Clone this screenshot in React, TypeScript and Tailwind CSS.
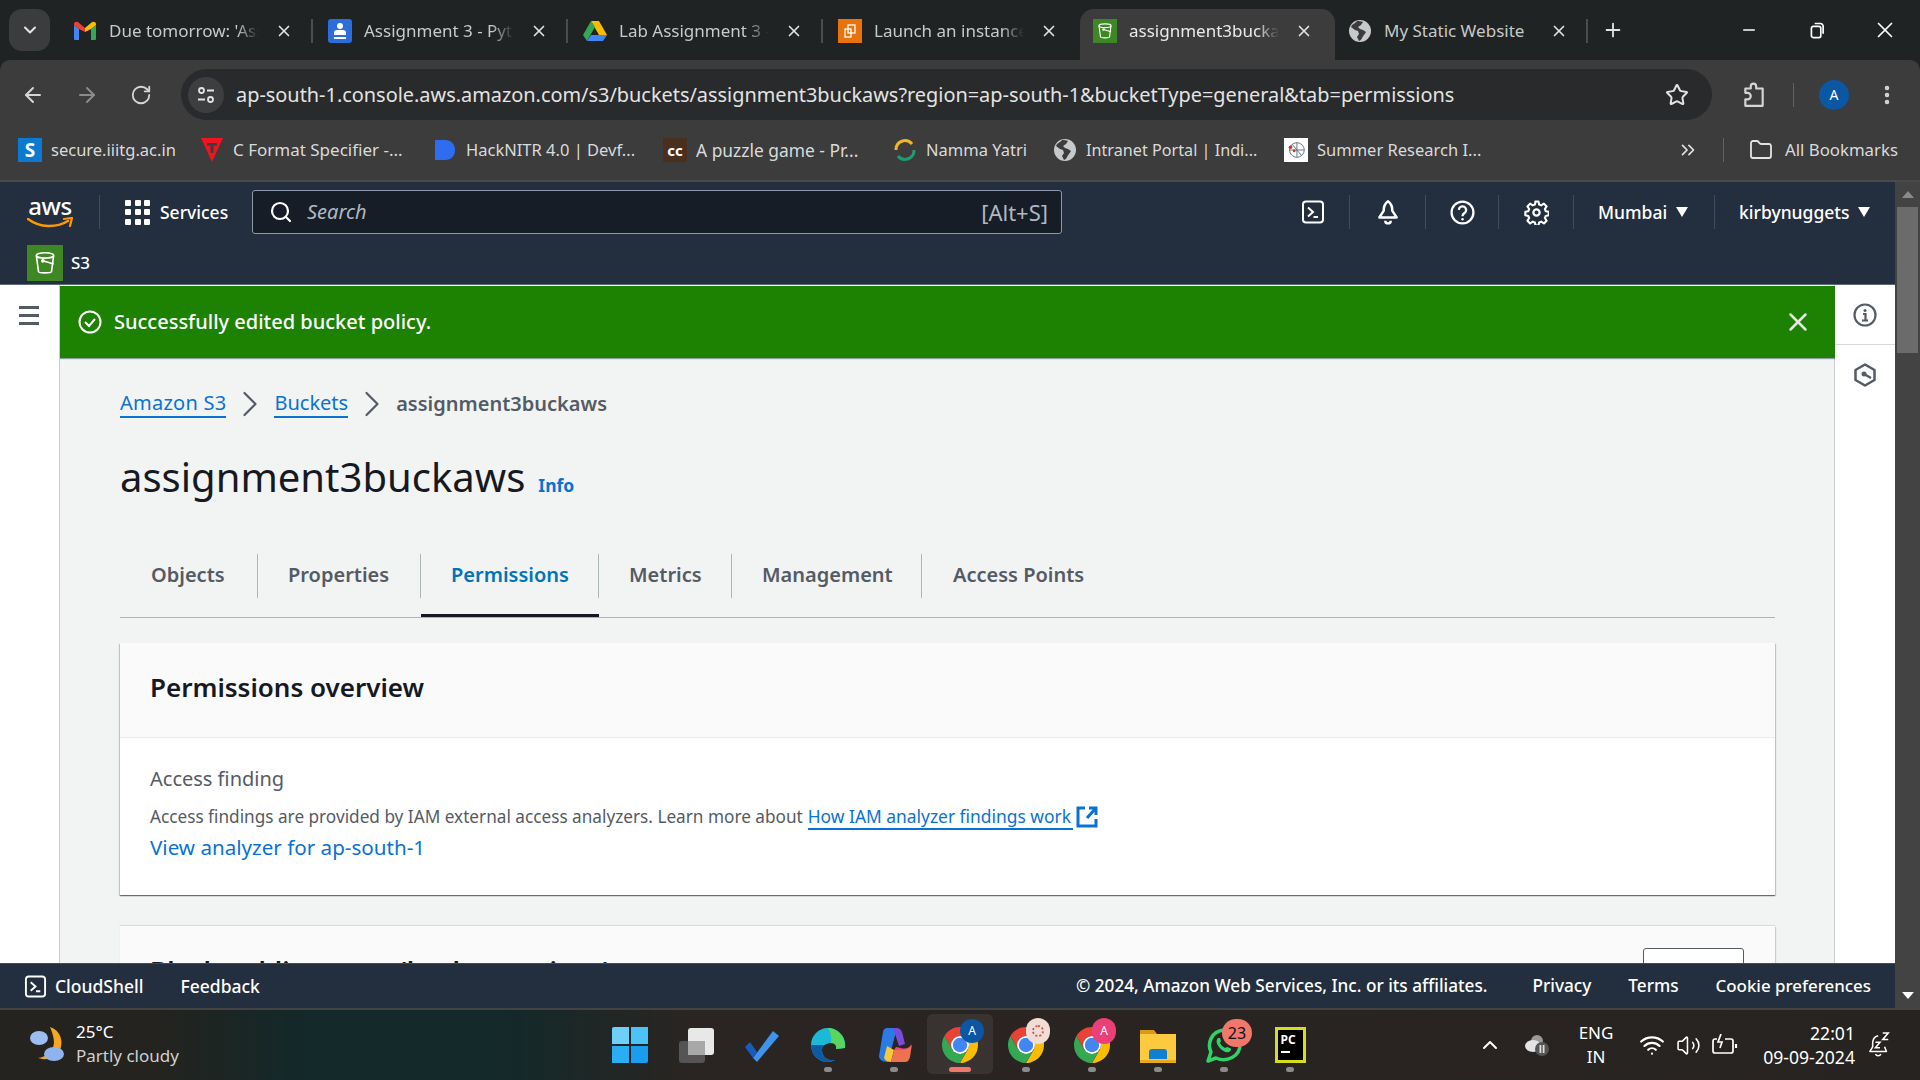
import React from "react";
import { ArrowLeft, ArrowRight, RotateCw, Star, MoreVertical, Folder, ChevronsRight, ChevronDown, X, Plus, Minus, Search, ChevronUp, Wifi, Volume2, ChevronRight } from "lucide-react";

const Gmail = () => (
  <svg viewBox="0 0 24 20" className="w-[24px] h-[20px]">
    <path d="M1 4v14a1 1 0 0 0 1 1h4V8z" fill="#4285f4" />
    <path d="M18 8v11h4a1 1 0 0 0 1-1V4z" fill="#34a853" />
    <path d="M1 4l0-1c0-2 3-3 4.500-1.500L12 7l0 4-6-3z" fill="#ea4335" />
    <path d="M23 4V3c0-2-3-3-4.500-1.500L12 7v4l6-3z" fill="#fbbc04" />
  </svg>
);
const Classroom = () => (
  <div className="w-[24px] h-[24px] rounded-[3px] bg-[#2a6ddb] flex flex-col items-center justify-center">
    <div className="w-[6px] h-[6px] rounded-full bg-white" />
    <div className="w-[12px] h-[5px] bg-white rounded-t-[3px] mt-[1px]" />
    <div className="w-[12px] h-[2px] bg-white mt-[2px]" />
  </div>
);
const Drive = () => (
  <svg viewBox="0 0 24 22" className="w-[24px] h-[22px]">
    <path d="M8 1h8l8 14h-8z" fill="#fbbc04" />
    <path d="M8 1 0 15l4 6 8-14z" fill="#34a853" />
    <path d="M4 21h16l4-6H8z" fill="#4285f4" />
  </svg>
);
const Ec2Fav = () => (
  <div className="w-[24px] h-[24px] bg-[#e8720c] flex items-center justify-center">
    <svg viewBox="0 0 16 16" className="w-[16px] h-[16px]" fill="none" stroke="#fff" strokeWidth="1.300">
      <rect x="6" y="2" width="7" height="8" />
      <rect x="3" y="6" width="6" height="8" />
    </svg>
  </div>
);
const BucketGlyph = ({ size }: { size: number }) => (
  <svg viewBox="0 0 24 24" width={size} height={size} fill="none" stroke="#fff" strokeWidth="1.500">
    <ellipse cx="12" cy="5" rx="8" ry="2.500" />
    <path d="M4 5l2 15c.2 1.500 11.800 1.500 12 0l2-15" />
    <path d="M10 10l10 3" />
    <circle cx="10" cy="10" r="1" fill="#fff" />
  </svg>
);
const S3Fav = () => (
  <div className="w-[24px] h-[24px] bg-[#3f8624] flex items-center justify-center">
    <BucketGlyph size={18} />
  </div>
);
const Globe = ({ s = 24 }: { s?: number }) => (
  <svg viewBox="0 0 24 24" width={s} height={s}>
    <circle cx="12" cy="12" r="11" fill="#c7c9ca" />
    <path d="M9 2c-1 2-5 3-6 6l4 3 3 1 1 3-2 3 2 4c3-1 3-4 5-6l2-3-3-2-3-1-2-2 3-2 2-3c-2-1-4-1-6-1z" fill="#3c3c3c" />
  </svg>
);

const tabs = [
  { icon: <Gmail />, t: "Due tomorrow: 'Assignment 3" },
  { icon: <Classroom />, t: "Assignment 3 - Python" },
  { icon: <Drive />, t: "Lab Assignment 3 - Google" },
  { icon: <Ec2Fav />, t: "Launch an instance | EC2" },
  { icon: <S3Fav />, t: "assignment3buckaws - S3", active: true },
  { icon: <Globe />, t: "My Static Website", plain: true },
];

function TabStrip() {
  return (
    <div className="h-[60px] bg-[#202323] flex pl-[9px] pt-[9px]">
      <div className="w-[41px] h-[42px] rounded-[13px] bg-[#3a3c3e] flex items-center justify-center">
        <ChevronDown size={20} color="#e3e3e3" strokeWidth={2.500} />
      </div>
      <div className="flex ml-[10px]">
        {tabs.map((t, i) => (
          <div key={i} className={`w-[255px] h-[51px] flex items-center pl-[13px] relative pb-[8px] ${t.active ? "bg-[#3c3c3c] rounded-t-[14px] h-[51px]" : ""}`}>
            <div className="w-[24px] h-[24px] flex items-center justify-center shrink-0">{t.icon}</div>
            <div className={`ml-[12px] w-[150px] text-[17px] whitespace-nowrap overflow-hidden ${t.plain ? "" : "[mask-image:linear-gradient(90deg,#000_85%,transparent)]"} ${t.active ? "text-[#e8eaed]" : "text-[#c7c9ca]"}`}>{t.t}</div>
            <div className="ml-[13px] w-[24px] flex justify-center"><X size={18} color="#e3e3e3" strokeWidth={2.200} /></div>
            {!t.active && i !== 3 && <div className="w-[2px] h-[24px] bg-[#4a4c4e] ml-[15px]" />}
          </div>
        ))}
      </div>
      <div className="w-[46px] h-[42px] flex items-center justify-center"><Plus size={22} color="#e3e3e3" strokeWidth={2} /></div>
      <div className="ml-auto flex h-[42px] pr-[1px]">
        <div className="w-[68px] flex items-center justify-center"><Minus size={18} color="#fff" strokeWidth={2} /></div>
        <div className="w-[68px] flex items-center justify-center">
          <svg viewBox="0 0 16 18" className="w-[15px] h-[17px]" fill="none" stroke="#fff" strokeWidth="1.800">
            <rect x="1.500" y="4.500" width="10" height="12" rx="2" />
            <path d="M5 1.500h6a3 3 0 0 1 3 3v8" />
          </svg>
        </div>
        <div className="w-[68px] flex items-center justify-center"><X size={26} color="#fff" strokeWidth={1.600} /></div>
      </div>
    </div>
  );
}

function Toolbar() {
  return (
    <div className="h-[60px] bg-[#3c3c3c] rounded-t-[10px] flex items-center pl-[6px] pt-[9px]">
      <div className="w-[54px] flex justify-center"><ArrowLeft size={24} color="#d5d5d5" strokeWidth={2} /></div>
      <div className="w-[54px] flex justify-center"><ArrowRight size={24} color="#8a8b8c" strokeWidth={2} /></div>
      <div className="w-[54px] flex justify-center"><RotateCw size={22} color="#d5d5d5" strokeWidth={2} /></div>
      <div className="ml-[13px] w-[1531px] h-[51px] rounded-full bg-[#282a2b] flex items-center pl-[7px]">
        <div className="w-[36px] h-[36px] rounded-full bg-[#3c3e40] flex items-center justify-center">
          <svg viewBox="0 0 20 20" className="w-[20px] h-[20px]" fill="none" stroke="#e3e3e3" strokeWidth="1.800">
            <circle cx="5.500" cy="5.500" r="2.500" />
            <path d="M11 5.500h7M2 14.500h7" />
            <circle cx="14.500" cy="14.500" r="2.500" />
          </svg>
        </div>
        <div className="ml-[12px] text-[19.900px] text-[#e3e3e3] whitespace-nowrap">ap-south-1.console.aws.amazon.com/s3/buckets/assignment3buckaws?region=ap-south-1&amp;bucketType=general&amp;tab=permissions</div>
        <div className="ml-auto mr-[23px]"><Star size={24} color="#e3e3e3" strokeWidth={2} /></div>
      </div>
      <div className="w-[84px] flex justify-center">
        <svg viewBox="0 0 24 24" className="w-[26px] h-[26px]" fill="none" stroke="#d5d5d5" strokeWidth="2">
          <path d="M4 6h5V4a2.500 2.500 0 0 1 5 0v2h6v16H4v-6h2a3 3 0 0 0 0-6H4z" strokeLinejoin="round" />
        </svg>
      </div>
      <div className="w-[1px] h-[24px] bg-[#606264] -ml-[3px]" />
      <div className="ml-[25px] w-[30px] h-[30px] rounded-full bg-[#0b57a4] text-white text-[14px] flex items-center justify-center">A</div>
      <div className="ml-[26px]"><MoreVertical size={24} color="#d5d5d5" strokeWidth={2.500} /></div>
    </div>
  );
}

const Bm = ({ w, icon, t, fs = "text-[16.500px]" }: { w: string; icon: React.ReactNode; t: string; fs?: string }) => (
  <div className={`${w} flex items-center shrink-0`}>
    <div className="w-[24px] h-[24px] flex items-center justify-center shrink-0">{icon}</div>
    <div className={`ml-[9px] ${fs} text-[#d9dadb] whitespace-nowrap`}>{t}</div>
  </div>
);

function Bookmarks() {
  return (
    <div className="h-[62px] bg-[#3c3c3c] border-b-2 border-[#4a4a4a] flex items-center pl-[18px]">
      <Bm w="w-[182px]" t="secure.iiitg.ac.in" icon={<div className="w-[24px] h-[24px] bg-[#0a7bd0] text-white font-bold text-[19px] flex items-center justify-center">S</div>} />
      <Bm w="w-[233px]" fs="text-[17px]" t="C Format Specifier -..." icon={<svg viewBox="0 0 24 24" className="w-[24px] h-[24px]"><path d="M1 0h22L12 24z" fill="#f0141e" /><path d="M7 5h10v2.500h-3.500V15h-3V7.500H7z" fill="#3c3c3c" /></svg>} />
      <Bm w="w-[230px]" t="HackNITR 4.0 | Devf..." icon={<svg viewBox="0 0 24 24" className="w-[24px] h-[24px]"><path d="M2 2h10c6 0 10 4 10 10s-4 10-10 10H2z" fill="#2f6df0" /></svg>} />
      <Bm w="w-[230px]" fs="text-[17.400px]" t="A puzzle game - Pr..." icon={<div className="w-[24px] h-[24px] bg-[#4b2f1e] text-white font-bold text-[15px] flex items-center justify-center">cc</div>} />
      <Bm w="w-[160px]" t="Namma Yatri" icon={<svg viewBox="0 0 24 24" className="w-[24px] h-[24px]" fill="none" strokeWidth="3"><path d="M3 12a9 9 0 0 1 16-6" stroke="#f5b32a" /><path d="M21 12a9 9 0 0 1-16 6" stroke="#1f9d72" /></svg>} />
      <Bm w="w-[231px]" fs="text-[16.200px]" t="Intranet Portal | Indi..." icon={<Globe />} />
      <Bm w="w-[393px]" t="Summer Research I..." icon={<div className="w-[24px] h-[24px] bg-white flex items-center justify-center"><svg viewBox="0 0 24 24" className="w-[22px] h-[22px]" fill="none" stroke="#58707e" strokeWidth="1"><circle cx="13" cy="12" r="8" /><path d="M13 4v16M5 12h16M8 6l10 12" /><circle cx="6" cy="9" r="2" fill="#d3312f" stroke="none" /><circle cx="10" cy="13" r="1.500" fill="#d3312f" stroke="none" /></svg></div>} />
      <ChevronsRight size={22} color="#e3e3e3" strokeWidth={1.800} />
      <div className="w-[1px] h-[24px] bg-[#606264] ml-[24px]" />
      <div className="ml-[25px]"><Folder size={24} color="#e3e3e3" strokeWidth={1.800} /></div>
      <div className="ml-[12px] text-[16.800px] text-[#d9dadb] whitespace-nowrap">All Bookmarks</div>
    </div>
  );
}

const NavSep = () => <div className="w-[1px] h-[34px] bg-[#414d5c] shrink-0" />;

const ShellIcon = ({ s = 24 }: { s?: number }) => (
  <svg viewBox="0 0 24 24" width={s} height={s} fill="none" stroke="#fff" strokeWidth="2">
    <rect x="2" y="1.500" width="20" height="21" rx="3" />
    <path d="M7 7.500l5 4.500-5 4.500M12.500 17H17" />
  </svg>
);

function AwsNav() {
  return (
    <div className="bg-[#232f3e] border-b border-[#5f6b7a] shrink-0">
      <div className="h-[60px] flex items-center text-white">
        <div className="w-[99px] pl-[27px]">
          <div className="w-[46px] flex flex-col items-center leading-none">
            <span className="text-[24px] leading-[22px] font-medium -tracking-[0.5px]">aws</span>
            <svg viewBox="0 0 46 12" className="w-[46px] h-[12px]" fill="none">
              <path d="M1 2c12 9 28 9 40 2" stroke="#f90" strokeWidth="2.500" strokeLinecap="round" />
              <path d="M37 2l8-1-2 8" stroke="#f90" strokeWidth="2.200" strokeLinecap="round" strokeLinejoin="round" />
            </svg>
          </div>
        </div>
        <NavSep />
        <div className="ml-[25px] grid grid-cols-3 gap-[3.500px]">
          {Array.from({ length: 9 }).map((_, i) => <div key={i} className="w-[6px] h-[6px] bg-white rounded-[1px]" />)}
        </div>
        <span className="ml-[10px] w-[92px] text-[17.500px] font-medium">Services</span>
        <div className="w-[810px] h-[44px] bg-[#161d26] border border-[#8d99a8] rounded-[3px] flex items-center pl-[16px] pr-[13px]">
          <Search size={24} color="#fff" strokeWidth={2.200} />
          <span className="ml-[14px] italic text-[20px] text-[#b0b8c2]">Search</span>
          <span className="ml-auto text-[22px] text-[#b0b8c2]">[Alt+S]</span>
        </div>
        <div className="ml-[215px] w-[72px] flex justify-center"><ShellIcon /></div>
        <NavSep />
        <div className="w-[75px] flex justify-center">
          <svg viewBox="0 0 24 24" className="w-[26px] h-[26px]" fill="none" stroke="#fff" strokeWidth="2.300" strokeLinejoin="round">
            <path d="M12 2c3 2 4 6 4 9l4 6H4l4-6c0-3 1-7 4-9zM9.500 20a2.500 2.500 0 0 0 5 0" />
          </svg>
        </div>
        <NavSep />
        <div className="w-[72px] flex justify-center">
          <svg viewBox="0 0 24 24" className="w-[25px] h-[25px]" fill="none" stroke="#fff" strokeWidth="2.200">
            <circle cx="12" cy="12" r="10.500" />
            <path d="M8.500 9.500a3.500 3.500 0 1 1 5.500 3c-1.500 1-2 1.500-2 3" />
            <circle cx="12" cy="18.500" r="1.200" fill="#fff" stroke="none" />
          </svg>
        </div>
        <NavSep />
        <div className="w-[74px] flex justify-center">
          <svg viewBox="0 0 24 24" className="w-[25px] h-[25px]" fill="none" stroke="#fff" strokeWidth="2.200" strokeLinejoin="round">
            <circle cx="12" cy="12" r="3" />
            <path d="M10 1.500h4l.7 3.200 2.200.9 2.800-1.800 2.800 2.900-1.800 2.700.9 2.300 3.100.6v3.600l-3.100.8-.9 2.100 1.800 2.800-2.800 2.800-2.800-1.800-2.200.9-.7 3.100h-4" transform="translate(1 0) scale(.92)" />
            <path d="M11 1.500l-.7 3.200-2.200.9-2.800-1.800-2.800 2.900 1.800 2.700-.9 2.300-3.100.6v3.600l3.100.8.9 2.100-1.800 2.800 2.800 2.800 2.800-1.800 2.200.9.700 3.100" transform="translate(1 0) scale(.92)" />
          </svg>
        </div>
        <NavSep />
        <div className="w-[140px] flex items-center pl-[24px]">
          <span className="text-[17.500px] font-medium">Mumbai</span>
          <div className="ml-[9px] w-0 h-0 border-l-[6px] border-r-[6px] border-t-[10px] border-l-transparent border-r-transparent border-t-white" />
        </div>
        <NavSep />
        <div className="flex items-center pl-[24px]">
          <span className="text-[17.500px] font-medium">kirbynuggets</span>
          <div className="ml-[8px] w-0 h-0 border-l-[6px] border-r-[6px] border-t-[10px] border-l-transparent border-r-transparent border-t-white" />
        </div>
      </div>
      <div className="h-[42px] flex items-start pl-[27px] pt-[3px] text-white">
        <div className="w-[36px] h-[36px] bg-[#3f8624] flex items-center justify-center"><BucketGlyph size={26} /></div>
        <span className="ml-[8px] mt-[5px] text-[17px] font-medium">S3</span>
      </div>
    </div>
  );
}

const Crumb = ({ t, c }: { t: string; c?: string }) => (
  <span className={`text-[#0972d3] text-[20px] border-b-2 border-[#0972d3] leading-[26px] ${c ?? ""}`}>{t}</span>
);

const tabCells = [
  { t: "Objects", w: "w-[138px]", pl: "pl-[31px]" },
  { t: "Properties", w: "w-[163px]", pl: "pl-[30px]" },
  { t: "Permissions", w: "w-[178px]", pl: "pl-[30px]", active: true },
  { t: "Metrics", w: "w-[133px]", pl: "pl-[30px]" },
  { t: "Management", w: "w-[190px]", pl: "pl-[30px]" },
  { t: "Access Points", w: "w-[190px]", pl: "pl-[31px]", last: true },
];

function Content() {
  return (
    <div className="flex-1 min-w-0 bg-[#f2f3f3] shadow-[inset_-1px_0_0_#c6ccd0] pt-[1px] flex flex-col overflow-hidden">
      <div className="h-[72px] bg-[#1d8102] shrink-0 shadow-[0_1px_1px_rgba(0,28,36,0.4)] flex items-center pl-[18px] pr-[22px] text-white">
        <svg viewBox="0 0 24 24" className="w-[24px] h-[24px]" fill="none" stroke="#fff" strokeWidth="2">
          <circle cx="12" cy="12" r="10.500" />
          <path d="M7 12l4 4 6-7" />
        </svg>
        <span className="ml-[12px] text-[20px] font-medium">Successfully edited bucket policy.</span>
        <X size={30} color="#e4e7e2" strokeWidth={2} className="ml-auto" />
      </div>
      <div className="pl-[60px] pr-[60px]">
        <div className="flex items-center mt-[33px] h-[26px]">
          <Crumb t="Amazon S3" c="tracking-[0.25px]" />
          <ChevronRight size={44} color="#545b64" strokeWidth={1.200} className="mx-[2px]" />
          <Crumb t="Buckets" />
          <ChevronRight size={44} color="#545b64" strokeWidth={1.200} className="mx-[2px]" />
          <span className="text-[20px] font-semibold text-[#545b64]">assignment3buckaws</span>
        </div>
        <div className="flex items-baseline mt-[35px] h-[50px]">
          <span className="text-[40px] leading-[50px] text-[#16191f]">assignment3buckaws</span>
          <span className="ml-[13px] text-[17.500px] font-bold text-[#0972d3]">Info</span>
        </div>
        <div className="flex mt-[42px] border-b border-[#aab7b8] h-[74px]">
          {tabCells.map((c) => (
            <div key={c.t} className={`${c.w} h-[73px] pt-[10px] pb-[16px] border-b-[3px] ${c.active ? "border-[#16191f]" : "border-transparent"}`}>
              <div className={`h-[44px] flex items-center pb-[2px] ${c.pl} ${c.last ? "" : "border-r border-[#aab7b8]"} text-[20px] font-semibold ${c.active ? "text-[#0073bb]" : "text-[#545b64]"}`}>{c.t}</div>
            </div>
          ))}
        </div>
        <div className="mt-[25px] bg-white shadow-[0_1px_1px_0_rgba(0,28,36,0.45),1px_1px_1px_0_rgba(0,28,36,0.15),-1px_1px_1px_0_rgba(0,28,36,0.15)] h-[252px]">
          <div className="h-[95px] bg-[#fafafa] border-b border-[#eaeded] flex items-center pl-[30px] pb-[5px]">
            <span className="text-[26px] font-semibold text-[#16191f]">Permissions overview</span>
          </div>
          <div className="pl-[30px] pt-[27px]">
            <div className="text-[20px] leading-[28px] text-[#545b64]">Access finding</div>
            <div className="mt-[10px] text-[17.200px] leading-[24px] text-[#545b64] flex items-center">
              <span>Access findings are provided by IAM external access analyzers. Learn more about</span>
              <span className="ml-[5px] mt-[2px] text-[17.400px] text-[#0972d3] border-b-2 border-[#0972d3] leading-[23px] pr-[2px]">How IAM analyzer findings work</span>
              <svg viewBox="0 0 22 22" className="w-[22px] h-[22px] ml-[3px]" fill="none" stroke="#0972d3" strokeWidth="3">
                <path d="M9 2H2v18h18v-7M13 2h7v7M20 2l-9 10" />
              </svg>
            </div>
            <div className="mt-[3px] text-[20.600px] leading-[28px] text-[#0972d3]">View analyzer for ap-south-1</div>
          </div>
        </div>
        <div className="mt-[31px] bg-[#fafafa] shadow-[0_-1px_1px_0_rgba(0,28,36,0.1),1px_1px_1px_0_rgba(0,28,36,0.15)] h-[95px] flex items-start pl-[30px] pr-[31px]">
          <span className="mt-[26px] text-[26px] leading-[36px] font-semibold text-[#16191f] whitespace-nowrap">Block public access (bucket settings)</span>
          <div className="ml-auto mt-[22px] w-[101px] h-[42px] bg-white border border-[#545b64] rounded-[3px]" />
        </div>
      </div>
    </div>
  );
}

function Main() {
  return (
    <div className="flex-1 min-h-0 flex bg-white">
      <div className="w-[60px] shrink-0 border-r border-[#c6ccd0] bg-white pt-[21px] flex justify-center">
        <div className="w-[21px] flex flex-col gap-[5px] pr-[1px]">
          <div className="h-[3px] bg-[#545b64]" /><div className="h-[3px] bg-[#545b64]" /><div className="h-[3px] bg-[#545b64]" />
        </div>
      </div>
      <Content />
      <div className="w-[60px] shrink-0 bg-white">
        <div className="h-[60px] border-b border-[#d5dbdb] flex items-center justify-center">
          <svg viewBox="0 0 24 24" className="w-[24px] h-[24px]" fill="none" stroke="#545b64" strokeWidth="2.200">
            <circle cx="12" cy="12" r="10.500" />
            <circle cx="12" cy="7.500" r="1.500" fill="#545b64" stroke="none" />
            <path d="M10 11h2.500v6M9 17.500h6" />
          </svg>
        </div>
        <div className="h-[50px] flex items-center justify-center pt-[10px]">
          <svg viewBox="0 0 24 24" className="w-[24px] h-[24px]" fill="none" stroke="#545b64" strokeWidth="2.500">
            <path d="M12 1.500l9.500 5.500v10L12 22.500 2.500 17V7z" strokeLinejoin="round" />
            <circle cx="11" cy="11" r="2.500" fill="#545b64" stroke="none" />
            <path d="M11 11l7 4" />
          </svg>
        </div>
      </div>
    </div>
  );
}

function Footer() {
  return (
    <div className="h-[45px] shrink-0 bg-[#232f3e] border-t border-[#414d5c] flex items-center pl-[24px] pr-[24px] text-[17.500px] text-white">
      <ShellIcon s={23} />
      <span className="ml-[8px] font-medium">CloudShell</span>
      <span className="ml-[37px] font-medium">Feedback</span>
      <span className="ml-auto font-medium text-[17.200px]">© 2024, Amazon Web Services, Inc. or its affiliates.</span>
      <span className="ml-[45px] font-medium text-[17.200px]">Privacy</span>
      <span className="ml-[37px] font-medium text-[17.200px]">Terms</span>
      <span className="ml-[37px] font-medium text-[16.900px]">Cookie preferences</span>
    </div>
  );
}

function Scrollbar() {
  return (
    <div className="w-[25px] shrink-0 bg-[#434343] flex flex-col items-center">
      <div className="h-[25px] flex items-center justify-center">
        <div className="w-0 h-0 border-l-[6px] border-r-[6px] border-b-[7px] border-l-transparent border-r-transparent border-b-[#8a8a8a]" />
      </div>
      <div className="w-[21px] h-[146px] bg-[#6b6b6b]" />
      <div className="mt-auto h-[30px] flex items-center justify-center">
        <div className="w-0 h-0 border-l-[6px] border-r-[6px] border-t-[7px] border-l-transparent border-r-transparent border-t-white" />
      </div>
    </div>
  );
}

const ChromeLogo = ({ s = 36 }: { s?: number }) => (
  <svg viewBox="4 4 40 40" width={s} height={s}>
    <path d="M6.680 14A20 20 0 0 1 41.320 14H24a10 10 0 0 0-8.660 15z" fill="#ea4335" />
    <path d="M41.320 14A20 20 0 0 1 24 44L32.660 29A10 10 0 0 0 24 14z" fill="#fbbc04" />
    <path d="M24 44A20 20 0 0 1 6.680 14L15.340 29A10 10 0 0 0 32.660 29z" fill="#34a853" />
    <circle cx="24" cy="24" r="10" fill="#fff" />
    <circle cx="24" cy="24" r="8" fill="#4285f4" />
  </svg>
);

const TbCell = ({ children, dot, active }: { children: React.ReactNode; dot?: boolean; active?: boolean }) => (
  <div className={`w-[66px] h-[60px] mt-[4px] flex flex-col items-center pt-[13px] relative shrink-0 ${active ? "bg-[#ffffff12] rounded-[6px]" : ""}`}>
    <div className="w-[36px] h-[36px] flex items-center justify-center relative">{children}</div>
    {active ? <div className="mt-[4px] w-[22px] h-[5px] rounded-full bg-[#f0786a]" /> : dot ? <div className="mt-[4px] w-[8px] h-[5px] rounded-full bg-[#8b8b8b]" /> : null}
  </div>
);

function Taskbar() {
  return (
    <div className="h-[70px] shrink-0 bg-[linear-gradient(90deg,#24231f_0%,#24231f_8%,#13292a_16%,#13292a_26%,#2a2522_36%,#272320_100%)] flex text-white">
      <div className="w-[597px] shrink-0 flex items-center pl-[28px] -mt-[2px]">
        <svg viewBox="0 0 38 38" className="w-[38px] h-[38px]">
          <path d="M22 2c10 3 14 14 10 23-4 8-14 11-22 8 8-1 15-6 16-15 0-6-2-11-4-16z" fill="#f5a623" />
          <ellipse cx="11" cy="13" rx="9" ry="7" fill="#9dbdf2" />
          <ellipse cx="26" cy="29" rx="10" ry="7" fill="#8fb3ee" />
        </svg>
        <div className="ml-[10px] flex flex-col">
          <span className="text-[17px] leading-[24px]">25°C</span>
          <span className="text-[17px] leading-[24px] text-[#d0d0d0]">Partly cloudy</span>
        </div>
      </div>
      <TbCell>
        <div className="grid grid-cols-2 gap-[2px] w-[36px] h-[36px]">
          <div className="bg-[#6ed0fa] rounded-tl-[2px]" /><div className="bg-[#4cc2f6]" /><div className="bg-[#2aaef3]" /><div className="bg-[#1a9cef] rounded-br-[2px]" />
        </div>
      </TbCell>
      <TbCell>
        <svg viewBox="0 0 36 36" className="w-[36px] h-[36px]"><rect x="1" y="14" width="26" height="22" rx="3" fill="#555" /><rect x="10" y="1" width="26" height="27" rx="3" fill="#e8e8e8" /><rect x="10" y="14" width="17" height="14" fill="#a8a8a8" /></svg>
      </TbCell>
      <TbCell>
        <svg viewBox="0 0 36 36" className="w-[36px] h-[36px]"><path d="M1 20l5-5 7 10-4 6z" fill="#185abd" /><path d="M9 31l20-27 6 5-22 26z" fill="#3f93ea" /></svg>
      </TbCell>
      <TbCell dot>
        <svg viewBox="0 0 36 36" className="w-[36px] h-[36px]">
          <path d="M18 1C8 1 1 9 1 18c0 10 8 17 16 17 3 0 6-1 8-2-8 1-13-3-13-10 0-5 5-7 9-7s6 3 5 6l9-1c2-11-7-20-17-20z" fill="#1bb8d8" />
          <path d="M18 1c9 0 18 8 17 20l-9 1c1-3-1-6-5-6 1-6-1-12-3-15z" fill="#5bd55b" />
          <path d="M1 18c0 10 8 17 16 17 3 0 6-1 8-2-8 1-13-3-13-10 0-2 1-4 2-5-6 0-11 0-13 0z" fill="#0c59a4" />
        </svg>
      </TbCell>
      <TbCell dot>
        <svg viewBox="0 0 36 36" className="w-[36px] h-[36px]">
          <path d="M11 1h10l-9 34c-6 0-9-3-9-6l4-24c0-2 2-4 4-4z" fill="#2b7be4" />
          <path d="M11 19l-3 12c2 3 4 4 7 4l3-12z" fill="#f6c93a" />
          <path d="M21 1c2 0 4 2 5 4l3 12-6 2-6-18z" fill="#7a4bdd" />
          <path d="M18 23h13c3 0 5-2 4-6-1 5-8 5-10 4l-5-1z" fill="#e84a8a" />
          <path d="M18 23l-3 12h14c3 0 4-2 5-5l2-13c-1 5-6 6-18 6z" fill="#f0714f" />
        </svg>
      </TbCell>
      <TbCell active>
        <ChromeLogo />
        <div className="absolute -top-[8px] -right-[6px] w-[24px] h-[24px] rounded-full bg-[#0b57a4] text-white text-[12px] flex items-center justify-center">A</div>
      </TbCell>
      <TbCell dot>
        <ChromeLogo />
        <div className="absolute -top-[9px] -right-[6px] w-[24px] h-[26px] rounded-full bg-[#f1ddd6] flex items-center justify-center"><div className="w-[12px] h-[12px] border-2 border-dotted border-[#c25a50] rounded-full" /></div>
      </TbCell>
      <TbCell dot>
        <ChromeLogo />
        <div className="absolute -top-[9px] -right-[6px] w-[24px] h-[26px] rounded-full bg-[#ea3f78] text-white text-[12px] flex items-center justify-center">A</div>
      </TbCell>
      <TbCell dot>
        <svg viewBox="0 0 36 36" className="w-[36px] h-[36px]">
          <path d="M0 3h14l3 4h19v29H0z" fill="#d89b16" />
          <rect y="7" width="36" height="29" fill="#fcc93f" />
          <rect x="11" y="21" width="25" height="15" fill="#fcc93f" />
          <path d="M9 25c0-2 1-3 3-3h12c2 0 3 1 3 3v7H9z" fill="#0f7fd1" />
          <rect x="0" y="33" width="36" height="3" fill="#e9a91f" />
        </svg>
      </TbCell>
      <TbCell dot>
        <svg viewBox="0 0 36 36" className="w-[36px] h-[36px]" fill="none">
          <path d="M2 34l3-9C1 17 5 4 18 3c10 0 16 7 16 15 0 11-13 18-24 13z" stroke="#2fd365" strokeWidth="3.500" strokeLinejoin="round" />
          <path d="M12 11c-2 2-2 5 1 9s7 6 10 5c2-1 3-3 1-4l-3-1-2 1c-2-1-4-3-5-5l1-2-1-3z" fill="#2fd365" />
        </svg>
        <div className="absolute -top-[8px] -right-[10px] w-[30px] h-[28px] rounded-full bg-[#f0776a] text-[#111] text-[16px] flex items-center justify-center">23</div>
      </TbCell>
      <TbCell dot>
        <div className="w-[31px] h-[36px] bg-[#d8dc1e] p-[3px]">
          <div className="w-full h-full bg-black flex flex-col pl-[3px] pt-[3px]">
            <span className="text-white text-[12px] leading-[13px] font-bold">PC</span>
            <div className="w-[9px] h-[2px] bg-white mt-[5px]" />
          </div>
        </div>
      </TbCell>
      <div className="ml-auto flex items-center pr-[15px]">
        <div className="w-[40px] flex justify-center"><ChevronUp size={24} color="#fff" strokeWidth={2} /></div>
        <div className="w-[54px] flex justify-center">
          <svg viewBox="0 0 26 24" className="w-[26px] h-[24px]">
            <circle cx="13" cy="8" r="6" fill="#9a9a9a" />
            <ellipse cx="9" cy="13" rx="8" ry="6" fill="#e4e4e4" />
            <circle cx="18" cy="16" r="7" fill="#555" />
            <rect x="15.500" y="12" width="1.800" height="8" fill="#ddd" />
            <rect x="18.700" y="12" width="1.800" height="8" fill="#ddd" />
          </svg>
        </div>
        <div className="w-[64px] flex flex-col items-center text-[17px] leading-[24px]"><span>ENG</span><span>IN</span></div>
        <div className="w-[48px] flex justify-center"><Wifi size={26} color="#fff" strokeWidth={2} /></div>
        <div className="w-[24px] flex justify-center"><Volume2 size={25} color="#fff" strokeWidth={1.500} className="shrink-0" /></div>
        <div className="w-[50px] flex justify-center">
          <svg viewBox="0 0 26 22" className="w-[26px] h-[22px]" fill="none" stroke="#fff" strokeWidth="1.700">
            <path d="M5 5H3a2 2 0 0 0-2 2v10a2 2 0 0 0 2 2h16a2 2 0 0 0 2-2V7a2 2 0 0 0-2-2h-6" />
            <path d="M24 10v4" strokeWidth="2.200" />
            <path d="M9 0 6 8h4l-2 6" />
          </svg>
        </div>
        <div className="w-[105px] flex flex-col items-end text-[17.600px] leading-[24px]"><span>22:01</span><span>09-09-2024</span></div>
        <div className="w-[50px] flex justify-center">
          <svg viewBox="0 0 24 30" className="w-[22px] h-[28px]" fill="none" stroke="#fff" strokeWidth="1.700">
            <path d="M10 5c-4 1-6 4-6 8v4l-3 5h18l-2-5M7 25a3.500 3.500 0 0 0 6 0" strokeLinejoin="round" />
            <path d="M7 12h5l-5 6h5M15 2h6l-6 7h6" />
          </svg>
        </div>
      </div>
    </div>
  );
}

export default function App() {
  return (
    <div className="w-[1920px] h-[1080px] overflow-hidden flex flex-col font-['Noto_Sans',sans-serif] bg-[#202323]">
      <div className="h-[182px] shrink-0 flex flex-col">
        <TabStrip />
        <Toolbar />
        <Bookmarks />
      </div>
      <div className="h-[828px] shrink-0 flex">
        <div className="flex-1 min-w-0 flex flex-col">
          <AwsNav />
          <Main />
          <Footer />
          <div className="h-[2px] shrink-0 bg-[#434343]" />
        </div>
        <Scrollbar />
      </div>
      <Taskbar />
    </div>
  );
}
